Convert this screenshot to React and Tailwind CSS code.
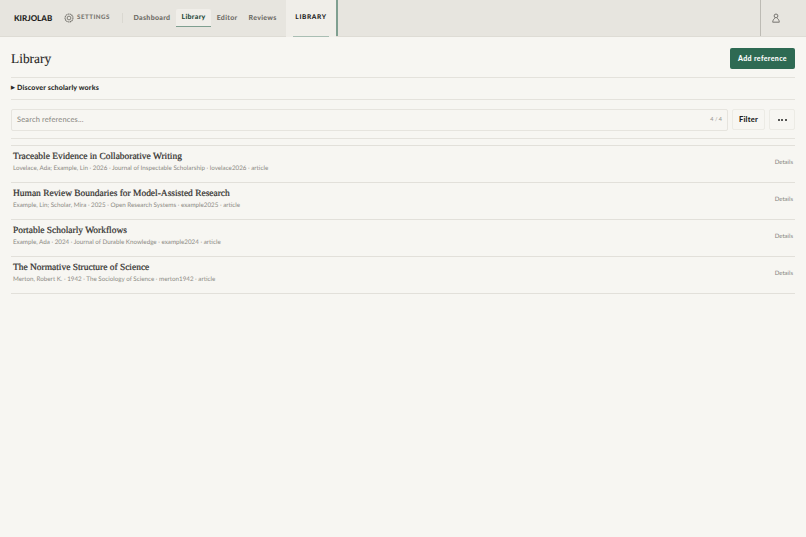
import React from "react";

const refs = [
   {
      title: "Traceable Evidence in Collaborative Writing",
      meta: "Lovelace, Ada; Example, Lin · 2026 · Journal of Inspectable Scholarship · lovelace2026 · article",
   },
   {
      title: "Human Review Boundaries for Model-Assisted Research",
      meta: "Example, Lin; Scholar, Mira · 2025 · Open Research Systems · example2025 · article",
   },
   {
      title: "Portable Scholarly Workflows",
      meta: "Example, Ada · 2024 · Journal of Durable Knowledge · example2024 · article",
   },
   {
      title: "The Normative Structure of Science",
      meta: "Merton, Robert K. · 1942 · The Sociology of Science · merton1942 · article",
   },
];

const sans = "font-['Lato','Noto_Sans',sans-serif]";
const serif = "font-['Liberation_Serif','DejaVu_Serif',serif]";

const GearIcon = () => (
   <svg viewBox="0 0 24 24" fill="none" stroke="currentColor" className="w-[10px] h-[10px] shrink-0 text-[#77756f]">
      <circle cx="12" cy="12" r="9.5" strokeWidth="2.6" strokeDasharray="3.4 1.1" />
      <circle cx="12" cy="12" r="4.5" strokeWidth="2.2" />
   </svg>
);

const UserIcon = () => (
   <svg viewBox="0 0 24 24" fill="none" stroke="currentColor" strokeWidth="2.3" className="w-[10px] h-[10px] text-[#6f6d67]">
      <circle cx="12" cy="7" r="4.5" />
      <path d="M4 22c0-1.5 1-6.5 5-9.5M20 22c0-1.5-1-6.5-5-9.5M4 22h16" />
   </svg>
);

const NavLink = ({ label, active }) => (
   <div
      className={`h-[18px] flex items-center px-[5.5px] text-[7px] font-black tracking-[0.045em] ${
         active
            ? "text-[#24493a] bg-[#f0eee9] border-b border-[#7f9f90] rounded-t-[2px]"
            : "text-[#6e6c66]"
      }`}
   >
      {label}
   </div>
);

const Row = ({ item }) => (
   <li className="h-[37px] border-b border-[#e2e0da] flex justify-between px-[2px]">
      <div className="pt-[5px]">
         <div className={`${serif} text-[9.45px] leading-[12px] text-[#2e2d2a] [-webkit-text-stroke:0.2px_#2e2d2a]`}>
            {item.title}
         </div>
         <div className="text-[6.25px] leading-[8px] mt-[1.5px] text-[#8c8a84]">{item.meta}</div>
      </div>
      <div className="text-[6px] leading-[10px] text-[#85837d] pt-[12px]">Details</div>
   </li>
);

const App = () => {
   return (
      <div className={`${sans} [text-rendering:geometricPrecision] w-[806px] h-[537px] bg-[#f7f6f2] overflow-hidden`}>
         <header className="h-[37px] flex bg-[#e7e5df] border-b border-[#dedcd5]">
            <div className="flex items-center pl-[14px] w-[286px] shrink-0">
               <span className="text-[8px] font-black text-[#1e1e1c] w-[50px] shrink-0">KIRJOLAB</span>
               <GearIcon />
               <span className="ml-[3px] w-[33px] shrink-0 whitespace-nowrap text-[6.2px] font-black tracking-[0.08em] text-[#77756f]">SETTINGS</span>
               <div className="h-[10px] w-px bg-[#dad8d1] ml-[12px] mr-[5px] shrink-0"></div>
               <NavLink label="Dashboard" />
               <NavLink label="Library" active />
               <NavLink label="Editor" />
               <NavLink label="Reviews" />
            </div>
            <div className="w-[50px] h-[37px] bg-[#f0eee9] flex flex-col items-center">
               <div className="flex-1 flex items-center text-[6.5px] font-black tracking-[0.1em] text-[#242422]">
                  LIBRARY
               </div>
               <div className="w-[36px] h-[1px] bg-[#a9beb3]"></div>
            </div>
            <div className="w-[2px] bg-[#7f9f90]"></div>
            <div className="flex-1"></div>
            <div className="w-[46px] border-l border-[#bdbbb4] flex items-center pl-[10px]">
               <UserIcon />
            </div>
         </header>

         <main className="px-[11px]">
            <div className="pt-[11px] pb-[8px] flex items-center justify-between border-b border-[#e4e2dc]">
               <h1 className={`${serif} text-[13.4px] leading-[21px] text-[#262522] [-webkit-text-stroke:0.1px_#262522]`}>Library</h1>
               <button className="w-[65px] h-[21px] bg-[#2e6a53] rounded-[2px] text-white text-[7px] font-black tracking-[0.05em]">
                  Add reference
               </button>
            </div>
            <div className="h-[22px] flex items-center border-b border-[#e4e2dc] text-[7.1px] font-black text-[#2a2a27] tracking-[0.02em]">
               <span className="text-[5px] mr-[2px]">▶</span>
               Discover scholarly works
            </div>
            <div className="flex gap-[4px] mt-[9px]">
               <div className="flex-1 h-[22px] border border-[#e6e4de] rounded-[2px] flex items-center justify-between pl-[5px] pr-[5px]">
                  <span className="text-[7.5px] text-[#85837d] tracking-[0.02em]">Search references...</span>
                  <span className="text-[5.5px] text-[#9b9993]">4 / 4</span>
               </div>
               <button className="w-[33px] h-[21px] border border-[#ecebe5] rounded-[2px] text-[7.5px] font-black text-[#222220] tracking-[0.03em]">
                  Filter
               </button>
               <button className="w-[26px] h-[21px] border border-[#ecebe5] rounded-[2px] flex items-center justify-center gap-[1.5px]">
                  <span className="w-[2px] h-[2px] rounded-full bg-[#222220]"></span>
                  <span className="w-[2px] h-[2px] rounded-full bg-[#222220]"></span>
                  <span className="w-[2px] h-[2px] rounded-full bg-[#222220]"></span>
               </button>
            </div>
            <div className="border-b border-[#e4e2dc] mt-[7px]"></div>
            <ul className="mt-[6px] border-t border-[#e2e0da]">
               {refs.map((r) => (
                  <Row key={r.title} item={r} />
               ))}
            </ul>
         </main>
      </div>
   );
};

export default App;
